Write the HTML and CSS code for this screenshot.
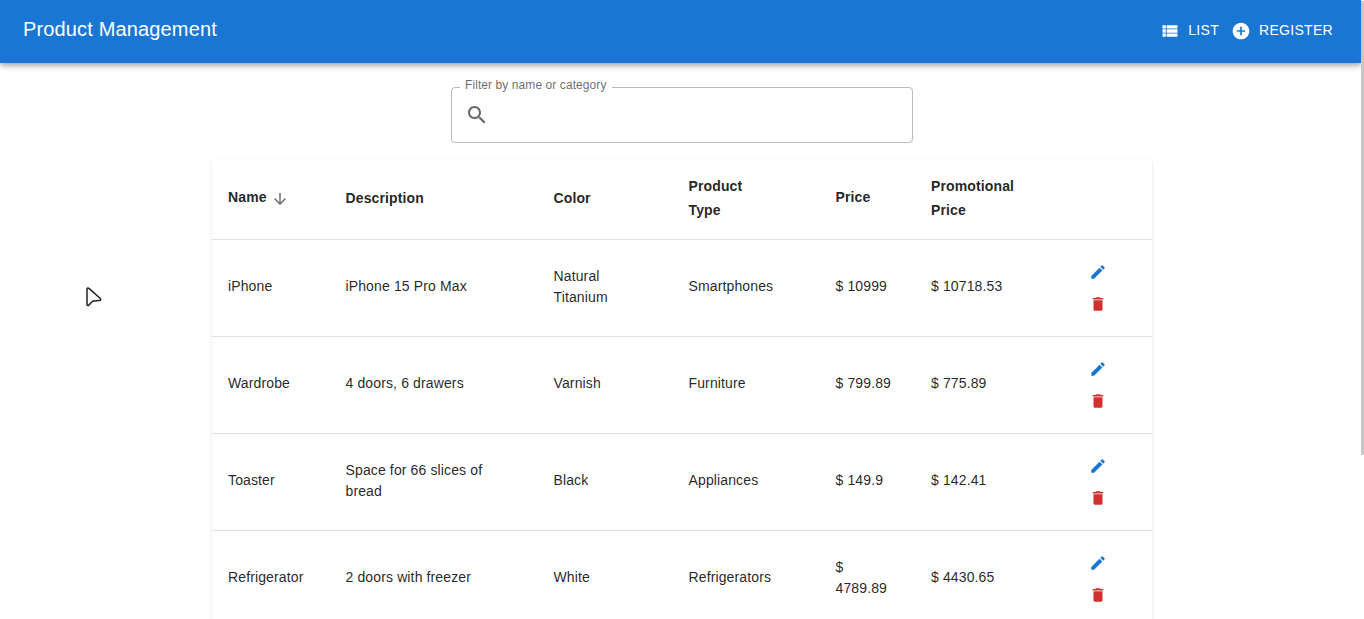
FILE: index.html
```html
<!DOCTYPE html>
<html lang="en">
<head>
<meta charset="utf-8">
<title>Product Management</title>
<link rel="stylesheet" href="styles.css">
</head>
<body>
<svg class="defs" width="0" height="0">
  <symbol id="edit" viewBox="0 0 24 24"><path d="M3 17.25V21h3.75L17.81 9.94l-3.75-3.75L3 17.25zM20.71 7.04c.39-.39.39-1.02 0-1.41l-2.34-2.34a.9959.9959 0 0 0-1.41 0l-1.83 1.83 3.75 3.75 1.83-1.83z"/></symbol>
  <symbol id="delete" viewBox="0 0 24 24"><path d="M6 19c0 1.1.9 2 2 2h8c1.1 0 2-.9 2-2V7H6v12zM19 4h-3.5l-1-1h-5l-1 1H5v2h14V4z"/></symbol>
</svg>
<div class="page">
  <header class="bar">
    <h1 class="title">Product Management</h1>
    <nav class="nav">
      <a class="link"><svg class="icon" viewBox="0 0 24 24"><path d="M3 14h4v-4H3v4zm0 5h4v-4H3v4zM3 9h4V5H3v4zm5 5h13v-4H8v4zm0 5h13v-4H8v4zM8 5v4h13V5H8z"/></svg>LIST</a>
      <a class="link"><svg class="icon" viewBox="0 0 24 24"><path d="M12 2C6.48 2 2 6.48 2 12s4.48 10 10 10 10-4.48 10-10S17.52 2 12 2zm5 11h-4v4h-2v-4H7v-2h4V7h2v4h4v2z"/></svg>REGISTER</a>
    </nav>
  </header>
  <main class="main">
    <fieldset class="search">
      <legend>Filter by name or category</legend>
      <svg class="search-icon" viewBox="0 0 24 24"><path d="M15.5 14h-.79l-.28-.27C15.41 12.59 16 11.11 16 9.5 16 5.91 13.09 3 9.5 3S3 5.91 3 9.5 5.91 16 9.5 16c1.61 0 3.09-.59 4.23-1.57l.27.28v.79l5 4.99L20.49 19l-4.99-5zm-6 0C7.01 14 5 11.99 5 9.5S7.01 5 9.5 5 14 7.01 14 9.5 11.99 14 9.5 14z"/></svg>
    </fieldset>
    <section class="table">
      <div class="row head">
        <div class="sort"><span>Name</span><svg class="arrow" viewBox="0 0 24 24"><path d="M20 12l-1.41-1.41L13 16.17V4h-2v12.17l-5.58-5.59L4 12l8 8 8-8z"/></svg></div>
        <div>Description</div><div>Color</div><div>Product<br>Type</div><div class="raised">Price</div><div>Promotional<br>Price</div><div></div>
      </div>
      <div class="row"><div>iPhone</div><div>iPhone 15 Pro Max</div><div>Natural Titanium</div><div>Smartphones</div><div>$ 10999</div><div>$ 10718.53</div><div class="actions"><svg class="edit"><use href="#edit"/></svg><svg class="delete"><use href="#delete"/></svg></div></div>
      <div class="row"><div>Wardrobe</div><div>4 doors, 6 drawers</div><div>Varnish</div><div>Furniture</div><div>$ 799.89</div><div>$ 775.89</div><div class="actions"><svg class="edit"><use href="#edit"/></svg><svg class="delete"><use href="#delete"/></svg></div></div>
      <div class="row"><div>Toaster</div><div>Space for 66 slices of bread</div><div>Black</div><div>Appliances</div><div>$ 149.9</div><div>$ 142.41</div><div class="actions"><svg class="edit"><use href="#edit"/></svg><svg class="delete"><use href="#delete"/></svg></div></div>
      <div class="row"><div>Refrigerator</div><div>2 doors with freezer</div><div>White</div><div>Refrigerators</div><div>$<br>4789.89</div><div>$ 4430.65</div><div class="actions"><svg class="edit"><use href="#edit"/></svg><svg class="delete"><use href="#delete"/></svg></div></div>
    </section>
  </main>
  <div class="scrollbar"></div>
  <svg class="cursor" viewBox="0 0 18 22"><path d="M2 3.2v15.2c0 1.2 1 1.5 1.8.7l3-3.1c.6-.6 1-.8 1.8-.9l5.900-.5c1.300-.1 1.600-1.300.8-2.100L4 2.400C3.100 1.500 2 2 2 3.200z"/></svg>
</div>
</body>
</html>
```
FILE: styles.css
```css
* { box-sizing: border-box; }
body { margin: 0; font-family: "Liberation Sans", Arial, sans-serif; color: rgba(0,0,0,.87); background: #fff; }
svg { display: block; fill: currentColor; flex: none; }
.defs { position: absolute; }
.page { position: relative; height: 619px; overflow: hidden; }
.bar { height: 63px; width: 1361px; padding: 0 28px 0 23px; display: flex; justify-content: space-between; background: #1976d2; color: #fff; box-shadow: 0 2px 4px -1px rgba(0,0,0,.2), 0 4px 5px rgba(0,0,0,.14), 0 1px 10px rgba(0,0,0,.12); }
.title { margin: 13px 0 0; font-size: 20px; font-weight: 400; line-height: 32px; letter-spacing: .15px; }
.nav { display: flex; gap: 12px; padding-top: 18px; height: 42px; }
.link { display: flex; align-items: center; font-size: 14px; line-height: 24px; letter-spacing: .3px; }
.icon { width: 20px; height: 20px; margin: 2px 8px 0 0; }
.main { display: flex; flex-direction: column; align-items: center; padding-top: 15px; }
.search { width: 462px; height: 65px; margin: 0; padding: 0 13px; border: 1px solid #bbb; border-radius: 4px; color: rgba(0,0,0,.6); }
.search legend { margin-left: -5px; padding: 0 6px 4px 5px; font-size: 12px; line-height: 14px; letter-spacing: .08px; }
.search-icon { width: 24px; height: 24px; margin-top: 7px; }
.table { width: 940px; margin-top: 16px; border-radius: 4px; box-shadow: 0 2px 1px -1px rgba(0,0,0,.2), 0 1px 1px rgba(0,0,0,.14), 0 1px 3px rgba(0,0,0,.12); }
.row { display: grid; grid-template-columns: 117.5px 208px 135px 147px 95.5px 129px 108px; align-items: center; height: 97px; border-bottom: 1px solid #e0e0e0; font-size: 14px; line-height: 21px; letter-spacing: .13px; }
.row > div { padding: 0 16px 3px; }
.row.head { height: 81px; font-weight: 700; line-height: 24px; }
.head > div { padding-bottom: 2px; }
.row .sort { display: flex; align-items: center; padding-bottom: 4px; }
.arrow { width: 18px; height: 18px; margin: 4px 4px 0; opacity: .65; }
.row .raised { padding-bottom: 4px; }
.row .actions { display: flex; flex-direction: column; align-items: center; gap: 14px; padding: 0; }
.actions svg { width: 18px; height: 18px; }
.edit { color: #1976d2; }
.delete { color: #d32f2f; }
.scrollbar { position: absolute; right: 0; top: 1px; width: 3px; height: 454px; background: #c8c8c8; }
.cursor { position: absolute; left: 85px; top: 286px; width: 18px; height: 22px; fill: #fff; stroke: #222; stroke-width: 1.5; }
```
